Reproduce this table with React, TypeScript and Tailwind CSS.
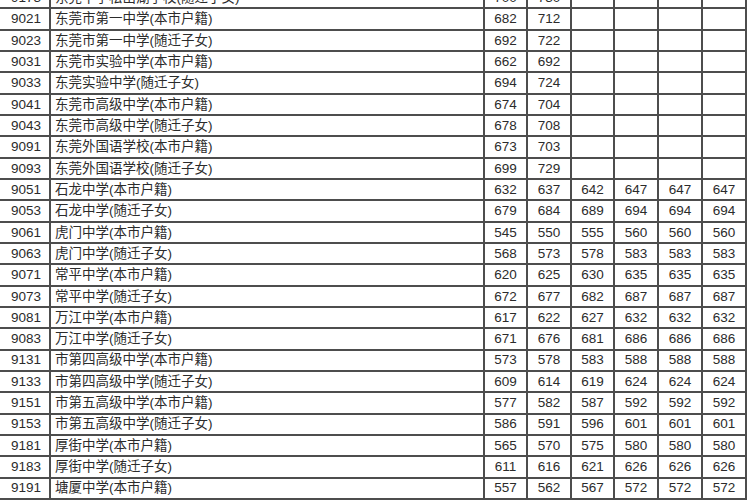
const ROWS: [string, string, string[]][] = [
  ["9173", "东莞中学松山湖学校(随迁子女)", ["700", "730"]],
  ["9021", "东莞市第一中学(本市户籍)", ["682", "712"]],
  ["9023", "东莞市第一中学(随迁子女)", ["692", "722"]],
  ["9031", "东莞市实验中学(本市户籍)", ["662", "692"]],
  ["9033", "东莞实验中学(随迁子女)", ["694", "724"]],
  ["9041", "东莞市高级中学(本市户籍)", ["674", "704"]],
  ["9043", "东莞市高级中学(随迁子女)", ["678", "708"]],
  ["9091", "东莞外国语学校(本市户籍)", ["673", "703"]],
  ["9093", "东莞外国语学校(随迁子女)", ["699", "729"]],
  ["9051", "石龙中学(本市户籍)", ["632", "637", "642", "647", "647", "647"]],
  ["9053", "石龙中学(随迁子女)", ["679", "684", "689", "694", "694", "694"]],
  ["9061", "虎门中学(本市户籍)", ["545", "550", "555", "560", "560", "560"]],
  ["9063", "虎门中学(随迁子女)", ["568", "573", "578", "583", "583", "583"]],
  ["9071", "常平中学(本市户籍)", ["620", "625", "630", "635", "635", "635"]],
  ["9073", "常平中学(随迁子女)", ["672", "677", "682", "687", "687", "687"]],
  ["9081", "万江中学(本市户籍)", ["617", "622", "627", "632", "632", "632"]],
  ["9083", "万江中学(随迁子女)", ["671", "676", "681", "686", "686", "686"]],
  ["9131", "市第四高级中学(本市户籍)", ["573", "578", "583", "588", "588", "588"]],
  ["9133", "市第四高级中学(随迁子女)", ["609", "614", "619", "624", "624", "624"]],
  ["9151", "市第五高级中学(本市户籍)", ["577", "582", "587", "592", "592", "592"]],
  ["9153", "市第五高级中学(随迁子女)", ["586", "591", "596", "601", "601", "601"]],
  ["9181", "厚街中学(本市户籍)", ["565", "570", "575", "580", "580", "580"]],
  ["9183", "厚街中学(随迁子女)", ["611", "616", "621", "626", "626", "626"]],
  ["9191", "塘厦中学(本市户籍)", ["557", "562", "567", "572", "572", "572"]],
];

const cell = "flex items-center border-r-2 border-[#4d4d4d]";

export default function App() {
  return (
    <div
      className="h-[500px] w-[750px] overflow-hidden bg-white text-[13.5px] leading-none text-[#2b2b2b]"
      style={{ fontFamily: '"Liberation Sans", "Noto Sans CJK SC", sans-serif' }}
    >
      <div className="-mt-[12px] w-[747px]">
        {ROWS.map(([code, name, scores]) => (
          <div
            key={code}
            className="grid h-[21.33px] grid-cols-[51px_434px_43px_44px_43px_44px_44px_44px] border-b-2 border-[#4d4d4d]"
          >
            <div className={`${cell} justify-end pr-[8px]`}>{code}</div>
            <div className={`${cell} pl-[4px]`}>{name}</div>
            {Array.from({ length: 6 }, (_, i) => (
              <div key={i} className={`${cell} justify-center`}>
                {scores[i] ?? ""}
              </div>
            ))}
          </div>
        ))}
      </div>
    </div>
  );
}
